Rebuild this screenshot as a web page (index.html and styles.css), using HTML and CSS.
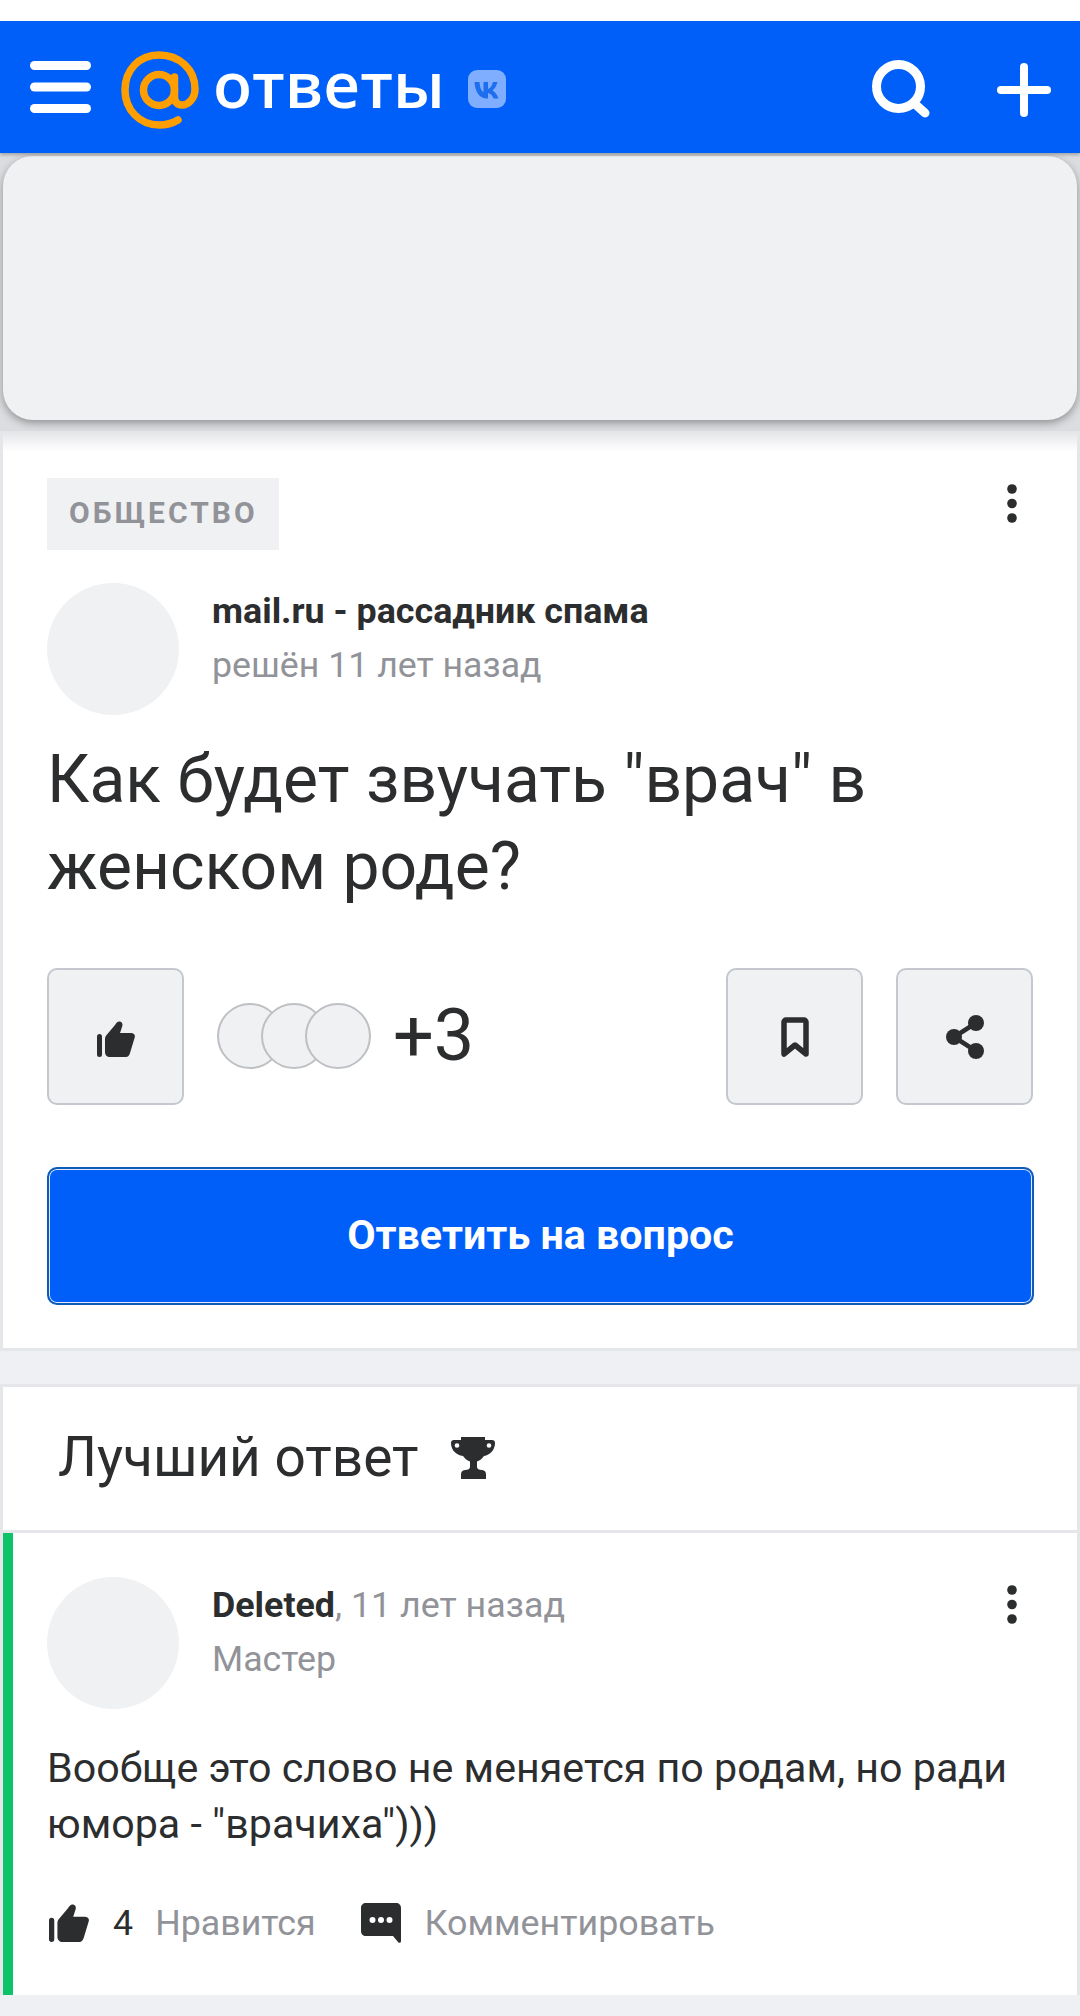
FILE: index.html
```html
<!DOCTYPE html>
<html lang="ru">
<head>
<meta charset="utf-8">
<title>Ответы</title>
<link rel="stylesheet" href="styles.css">
</head>
<body>
<div class="topstrip"></div>
<header class="header">
  <svg class="burger" viewBox="0 0 61 52"><g fill="#fff"><rect x="0" y="0" width="61" height="9" rx="4.500"/><rect x="0" y="21.500" width="61" height="9" rx="4.500"/><rect x="0" y="43" width="61" height="9" rx="4.500"/></g></svg>
  <svg class="at" viewBox="0 0 78 78"><g fill="none" stroke="#ff9e00" stroke-width="7.500" stroke-linecap="round"><circle cx="38" cy="39" r="15.500"/><path d="M53.500 26v20c0 5 3 8 7.500 8 6 0 13-6 13-16C74 18 58 4 38 4 18 4 4 19 4 39s15 35 34 35c8 0 14-2 19-5"/></g></svg>
  <span class="word">ответы</span>
  <svg class="vk" viewBox="0 0 38 38"><rect width="38" height="38" rx="9" fill="#7fadff"/><path d="M6.500 12h5c.5 6 2 9 4 10V12h4.500v7c2-.5 4-3 5-7h4.500c-1 4.500-3.500 7-5 8.500 2 1 4.500 3.500 6 8h-5c-1-3-3-5-5.500-5.500V28.500h-1C11.500 28.500 7 22 6.500 12z" fill="#1e6ff0"/></svg>
  <span class="spacer"></span>
  <svg class="search" viewBox="0 0 58 58"><g fill="none" stroke="#fff" stroke-width="9" stroke-linecap="round"><circle cx="26.500" cy="26.500" r="22"/><path d="M43 44l10 9"/></g></svg>
  <svg class="plus" viewBox="0 0 54 54"><g fill="none" stroke="#fff" stroke-width="8" stroke-linecap="round"><path d="M27 4v46M4 27h46"/></g></svg>
</header>
<div class="bannerwrap"><div class="banner"></div></div>

<section class="card question">
  <div class="tagrow">
    <span class="tag">ОБЩЕСТВО</span>
    <svg class="dots" viewBox="0 0 10 40"><g fill="#2c2d2e"><circle cx="5" cy="5" r="4.800"/><circle cx="5" cy="19.500" r="4.800"/><circle cx="5" cy="34" r="4.800"/></g></svg>
  </div>
  <div class="author">
    <div class="avatar"></div>
    <div class="meta">
      <div class="name">mail.ru - рассадник спама</div>
      <div class="sub">решён 11 лет назад</div>
    </div>
  </div>
  <h1 class="title">Как будет звучать "врач" в<br>женском роде?</h1>
  <div class="actions">
    <button class="sq">
      <svg class="ic-thumb" viewBox="0 0 38 36"><rect x="0" y="13" width="5" height="23" rx="2.500" fill="#2c2d2e"/><path d="M8 18c0-2 .8-3 2-4.500L18 4c1-2 3-4 5-3.500 2.500.7 3 3 2 5.500l-2 6h11c3 0 4.500 2 3.700 4.500L33 32c-.8 2.500-2 4-4 4H13c-3 0-5-2-5-5z" fill="#2c2d2e"/></svg>
    </button>
    <div class="faces"><span class="face"></span><span class="face"></span><span class="face"></span></div>
    <span class="plus3">+3</span>
    <span class="spacer"></span>
    <button class="sq">
      <svg class="ic-book" viewBox="0 0 28 40"><path d="M3 37V5c0-1 1-2 2-2h18c1 0 2 1 2 2v32l-11-9z" fill="none" stroke="#2c2d2e" stroke-width="5.500" stroke-linejoin="round"/></svg>
    </button>
    <button class="sq">
      <svg class="ic-share" viewBox="0 0 38 44"><g fill="#2c2d2e"><circle cx="8" cy="22" r="8"/><circle cx="30" cy="8" r="8"/><circle cx="30" cy="36" r="8"/></g><path d="M8 22L30 8M8 22l22 14" stroke="#2c2d2e" stroke-width="4.500"/></svg>
    </button>
  </div>
  <button class="answerbtn">Ответить на вопрос</button>
</section>

<section class="card best">
  <div class="besthead">
    <h2 class="besttitle">Лучший ответ</h2>
    <svg class="trophy" viewBox="0 0 44 42"><path d="M10 0h24v3h7c2 0 3 1 3 3 0 7-5 12-11 13-2 3-5 5-7 5.500V30c0 2 2 3 5 3 3 .5 4 2 4 4.500V42H10v-4.500c0-2.500 1-4 4-4.500 3 0 5-1 5-3v-5.500c-2-.5-5-2.500-7-5.500C5 18 0 13 0 6c0-2 1-3 3-3h7z" fill="#2c2d2e"/><circle cx="6" cy="8.500" r="2.300" fill="#fff"/><circle cx="38" cy="8.500" r="2.300" fill="#fff"/></svg>
  </div>
  <div class="answer">
    <div class="author author-a">
      <div class="avatar"></div>
      <div class="meta">
        <div class="name2"><b>Deleted</b><span class="grey">, 11 лет назад</span></div>
        <div class="sub">Мастер</div>
      </div>
      <span class="spacer"></span>
      <svg class="dots dots-a" viewBox="0 0 10 40"><g fill="#2c2d2e"><circle cx="5" cy="5" r="4.800"/><circle cx="5" cy="19.500" r="4.800"/><circle cx="5" cy="34" r="4.800"/></g></svg>
    </div>
    <p class="text">Вообще это слово не меняется по родам, но ради юмора - "врачиха")))</p>
    <div class="foot">
      <svg class="ic-thumb2" viewBox="0 0 38 36"><rect x="0" y="13" width="5" height="23" rx="2.500" fill="#2c2d2e"/><path d="M8 18c0-2 .8-3 2-4.500L18 4c1-2 3-4 5-3.500 2.500.7 3 3 2 5.500l-2 6h11c3 0 4.500 2 3.700 4.500L33 32c-.8 2.500-2 4-4 4H13c-3 0-5-2-5-5z" fill="#2c2d2e"/></svg>
      <span class="count">4</span>
      <span class="grey">Нравится</span>
      <svg class="ic-comment" viewBox="0 0 40 40"><path d="M5 0h30c3 0 5 2 5 5v33c0 2-2 2.500-3 1l-5-6H5c-3 0-5-2-5-5V5c0-3 2-5 5-5z" fill="#2c2d2e"/><g fill="#fff"><circle cx="11.500" cy="17" r="3"/><circle cx="20" cy="17" r="3"/><circle cx="28.500" cy="17" r="3"/></g></svg>
      <span class="grey">Комментировать</span>
    </div>
  </div>
</section>
</body>
</html>
```

FILE: styles.css
```css
* { box-sizing: border-box; }
html, body { margin: 0; padding: 0; }
body {
  width: 1080px;
  height: 2016px;
  overflow: hidden;
  background: #eff0f3;
  font-family: Roboto, "Noto Sans", sans-serif;
  color: #2c2d2e;
}
.spacer { flex: 1; }
.topstrip { height: 21px; background: #fff; }
.header {
  height: 132px;
  background: #005ff9;
  display: flex;
  align-items: flex-start;
  position: relative;
  z-index: 2;
  box-shadow: 0 2px 3px rgba(0,0,0,.25);
}
.burger { width: 61px; height: 52px; margin: 40px 0 0 30px; }
.at { width: 78px; height: 78px; margin: 30px 0 0 30px; }
.word {
  font-family: "Open Sans", sans-serif;
  font-weight: 600;
  font-size: 64px;
  line-height: 70px;
  color: #fff;
  margin: 28px 0 0 14px;
  width: 236px;
  white-space: nowrap;
}
.vk { width: 38px; height: 38px; margin: 49px 0 0 19px; }
.search { width: 58px; height: 58px; margin: 39px 0 0 0; }
.plus { width: 54px; height: 54px; margin: 42px 29px 0 67px; }
.bannerwrap {
  padding: 3px 3px 0;
  height: 278px;
  background: linear-gradient(#dcdde0, #dcdde0);
}
.banner {
  height: 264px;
  background: #f0f1f3;
  border-radius: 30px;
  box-shadow: 0 3px 8px rgba(0,0,0,.35);
}
.card {
  background: #fff;
  border: 3px solid #e5e6ea;
  border-top: 0;
}
.question {
  height: 920px;
  padding: 47px 44px 0;
  background: linear-gradient(#e3e4e7 0, #fff 20px);
}
.tagrow { display: flex; justify-content: space-between; align-items: flex-start; height: 72px; }
.tag {
  display: block;
  width: 232px;
  height: 72px;
  background: #f0f1f3;
  color: #919399;
  font-weight: 700;
  font-size: 30px;
  line-height: 70px;
  letter-spacing: 3px;
  padding-left: 22px;
  white-space: nowrap;
}
.dots { width: 10px; height: 40px; margin: 6px 16px 0 0; }
.author { display: flex; margin-top: 33px; }
.avatar { width: 132px; height: 132px; border-radius: 50%; background: #f0f1f3; flex: none; }
.meta { margin-left: 33px; padding-top: 8px; }
.name { font-weight: 700; font-size: 35.800px; line-height: 40px; }
.name2 { font-size: 35.800px; line-height: 40px; }
.name2 b { font-weight: 700; }
.sub { font-size: 35.700px; line-height: 40px; color: #919399; margin-top: 14px; }
.grey { color: #919399; }
.title {
  margin: 21px 0 0;
  font-weight: 400;
  font-size: 66px;
  line-height: 87px;
}
.actions { display: flex; align-items: center; margin-top: 57px; height: 138px; }
.sq {
  width: 137px;
  height: 137px;
  border: 2px solid #c5c7cf;
  border-radius: 10px;
  background: #f0f1f3;
  padding: 0;
  display: flex;
  align-items: center;
  justify-content: center;
  flex: none;
}
.actions .sq:nth-last-child(2) { margin-right: 33px; }
.ic-thumb { width: 38px; height: 36px; margin-top: 5px; }
.ic-book { width: 28px; height: 40px; margin-top: 2px; }
.ic-share { width: 38px; height: 44px; margin-top: 2px; }
.faces { display: flex; margin-left: 33px; }
.face {
  width: 66px;
  height: 66px;
  border-radius: 50%;
  background: #f0f1f3;
  border: 2px solid #bfc0c3;
  position: relative;
}
.face + .face { margin-left: -22px; }
.plus3 { font-size: 72px; margin-left: 22px; line-height: 70px; }
.answerbtn {
  display: block;
  width: 987px;
  height: 138px;
  margin-top: 62px;
  background: #005ff9;
  color: #fff;
  border: 2px solid #0d5cb8;
  box-shadow: inset 0 0 0 1px #dfeaff;
  border-radius: 10px;
  font-family: Roboto, sans-serif;
  font-weight: 700;
  font-size: 41.200px;
  padding: 0 0 2px;
}
.best { margin-top: 33px; border-top: 3px solid #e5e6ea; height: 611px; border-bottom: 0; }
.besthead {
  height: 146px;
  display: flex;
  align-items: center;
  padding: 0 0 3px 55px;
  border-bottom: 3px solid #e5e6ea;
}
.besttitle { margin: 0; font-weight: 400; font-size: 55px; line-height: 64px; }
.trophy { width: 44px; height: 42px; margin: 2px 0 0 32px; }
.answer {
  height: 462px;
  border-left: 10px solid #0dc268;
  padding: 44px 44px 0 34px;
}
.author-a { margin-top: 0; }
.dots-a { margin: 8px 16px 0 0; }
.text { margin: 31px 0 0; font-size: 41.200px; line-height: 56px; }
.foot {
  display: flex;
  align-items: center;
  margin-top: 48px;
  font-size: 35.800px;
  line-height: 40px;
  height: 46px;
}
.ic-thumb2 { width: 40px; height: 40px; margin-left: 2px; }
.count { margin-left: 24px; margin-right: 22px; }
.ic-comment { width: 40px; height: 40px; margin-left: 45px; margin-right: 24px; }
```
